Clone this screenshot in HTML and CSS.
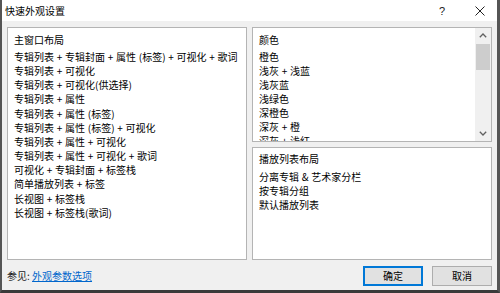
FILE: index.html
```html
<!DOCTYPE html>
<html lang="zh-CN">
<head>
<meta charset="utf-8">
<title>快速外观设置</title>
<link rel="stylesheet" href="styles.css">
</head>
<body>
<div class="window">
  <div class="titlebar">
    <span class="title">快速外观设置</span>
    <span class="help">?</span>
    <span class="close">
      <svg width="10" height="10" viewBox="0 0 10 10"><path d="M0.5 0.5 L9.5 9.5 M9.5 0.5 L0.5 9.5" stroke="#222" stroke-width="1" fill="none"/></svg>
    </span>
  </div>
  <div class="content">
    <div class="panes">
      <div class="list main-list">
        <div class="head">主窗口布局</div>
        <div class="item">专辑列表 + 专辑封面 + 属性 (标签) + 可视化 + 歌词</div>
        <div class="item">专辑列表 + 可视化</div>
        <div class="item">专辑列表 + 可视化(供选择)</div>
        <div class="item">专辑列表 + 属性</div>
        <div class="item">专辑列表 + 属性 (标签)</div>
        <div class="item">专辑列表 + 属性 (标签) + 可视化</div>
        <div class="item">专辑列表 + 属性 + 可视化</div>
        <div class="item">专辑列表 + 属性 + 可视化 + 歌词</div>
        <div class="item">可视化 + 专辑封面 + 标签栈</div>
        <div class="item">简单播放列表 + 标签</div>
        <div class="item">长视图 + 标签栈</div>
        <div class="item">长视图 + 标签栈(歌词)</div>
      </div>
      <div class="right-col">
        <div class="list color-list">
          <div class="list-inner">
            <div class="head">颜色</div>
            <div class="item">橙色</div>
            <div class="item">浅灰 + 浅蓝</div>
            <div class="item">浅灰蓝</div>
            <div class="item">浅绿色</div>
            <div class="item">深橙色</div>
            <div class="item">深灰 + 橙</div>
            <div class="item">深灰 + 浅红</div>
          </div>
          <div class="scrollbar">
            <div class="arrow">
              <svg width="8" height="5" viewBox="0 0 8 5"><path d="M0.8 4.2 L4 1 L7.2 4.2" stroke="#606060" stroke-width="1.3" fill="none"/></svg>
            </div>
            <div class="track"><div class="thumb"></div></div>
            <div class="arrow">
              <svg width="8" height="5" viewBox="0 0 8 5"><path d="M0.8 0.8 L4 4 L7.2 0.8" stroke="#606060" stroke-width="1.3" fill="none"/></svg>
            </div>
          </div>
        </div>
        <div class="list playlist-list">
          <div class="head">播放列表布局</div>
          <div class="item">分离专辑 &amp; 艺术家分栏</div>
          <div class="item">按专辑分组</div>
          <div class="item">默认播放列表</div>
        </div>
      </div>
    </div>
    <div class="footer">
      <div class="see-also">参见: <a class="link" href="#">外观参数选项</a></div>
      <div class="buttons">
        <button class="btn btn-default">确定</button>
        <button class="btn">取消</button>
      </div>
    </div>
  </div>
</div>
</body>
</html>
```

FILE: styles.css
```css
* { box-sizing: border-box; }

html, body {
  margin: 0;
  padding: 0;
  background: #f0f0f0;
}

body {
  font-family: "Noto Sans CJK SC", "Microsoft YaHei", sans-serif;
  font-size: 10px;
  color: #000;
}

.window {
  width: 500px;
  height: 293px;
  background: #f0f0f0;
  border-left: 2px solid #555;
  border-right: 3px solid #555;
  border-bottom: 3px solid #3a3a3a;
  display: flex;
  flex-direction: column;
  overflow: hidden;
}

.titlebar {
  height: 21px;
  background: #fff;
  display: flex;
  align-items: center;
  padding-left: 3px;
  flex: none;
}

.title {
  flex: 1;
  font-size: 10px;
  line-height: 14px;
}

.help {
  font-family: "Liberation Sans", Arial, sans-serif;
  font-size: 11px;
  width: 12px;
  text-align: center;
  margin-right: 27px;
  color: #222;
}

.close {
  display: flex;
  align-items: center;
  width: 10px;
  margin-right: 12px;
}

.content {
  flex: 1;
  padding: 6px 5px 0 5px;
  display: flex;
  flex-direction: column;
}

.panes {
  height: 233px;
  display: grid;
  grid-template-columns: 240px 240px;
  column-gap: 5px;
}

.list {
  background: #fff;
  border: 1px solid #b4b4b4;
  overflow: hidden;
  white-space: nowrap;
}

.head {
  line-height: 14px;
  margin-bottom: 3px;
}

.item {
  line-height: 14.15px;
  word-spacing: 0.5px;
}

.main-list {
  padding: 5px 6px;
}

.right-col {
  display: grid;
  grid-template-rows: 115px 113px;
  row-gap: 5px;
}

.color-list {
  display: flex;
}

.list-inner {
  flex: 1;
  padding: 5px 6px;
  overflow: hidden;
}

.list-inner .item {
  line-height: 14px;
}

.scrollbar {
  width: 16px;
  flex: none;
  background: #f0f0f0;
  display: flex;
  flex-direction: column;
}

.arrow {
  height: 15px;
  display: flex;
  align-items: center;
  justify-content: center;
  flex: none;
}

.track {
  flex: 1;
  padding: 0 1px;
}

.thumb {
  height: 26px;
  background: #cdcdcd;
  margin-top: 1px;
}

.playlist-list {
  padding: 4px 6px;
}

.playlist-list .head {
  margin-bottom: 4px;
}

.playlist-list .item {
  line-height: 14px;
}

.footer {
  display: flex;
  align-items: center;
  justify-content: space-between;
  padding-top: 6px;
  height: 30px;
  padding-bottom: 4px;
}

.see-also {
  line-height: 14px;
  color: #1a1a1a;
}

.link {
  color: #0066cc;
  text-decoration: underline;
}

.buttons {
  display: flex;
  gap: 9px;
}

.btn {
  width: 60px;
  height: 20px;
  padding: 0;
  font-family: "Noto Sans CJK SC", "Microsoft YaHei", sans-serif;
  font-size: 10px;
  line-height: 14px;
  color: #000;
  background: #e1e1e1;
  border: 1px solid #adadad;
}

.btn-default {
  border: 1px solid #0078d7;
  box-shadow: inset 0 0 0 1px #0078d7;
}
```
